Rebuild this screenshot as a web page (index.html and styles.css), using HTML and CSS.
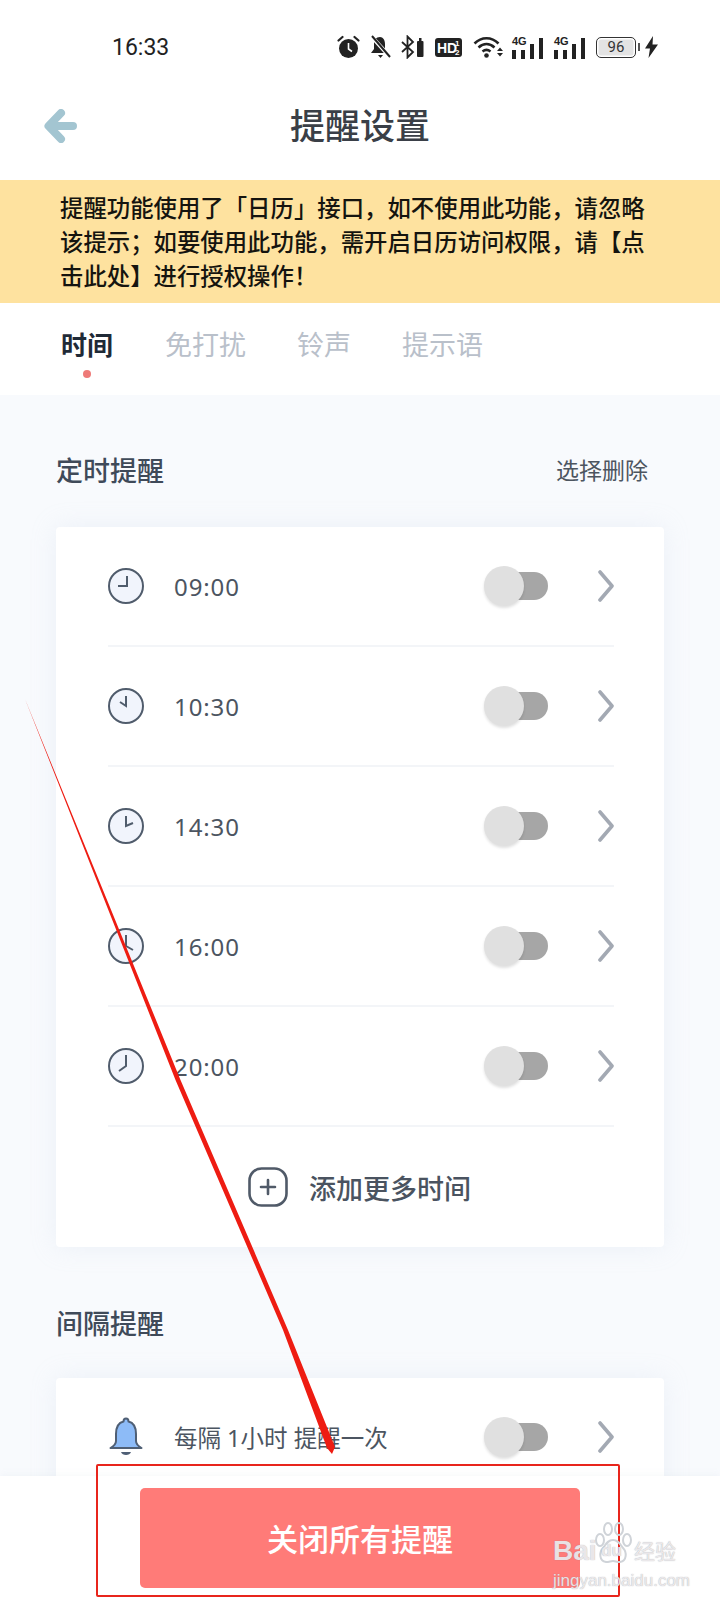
FILE: index.html
```html
<!DOCTYPE html>
<html lang="zh-CN">
<head>
    <meta charset="UTF-8">
    <meta name="viewport" content="width=device-width, initial-scale=1.0">
    <title>提醒设置</title>
    <link rel="stylesheet" href="styles.css">
</head>
<body>
<div class="phone">

    <div class="statusBar">
        <div class="clock">16:33</div>
        <div class="statusIcons">
            <svg class="icoAlarm" width="23" height="24" viewBox="0 0 23 24"><circle cx="11.5" cy="13.5" r="9.5" fill="#222"/><path d="M11.5 8v6l3.5 2.5" fill="none" stroke="#fff" stroke-width="1.6"/><path d="M1.5 5.5 5.5 2M21.5 5.5 17.5 2" stroke="#222" stroke-width="2.2" stroke-linecap="round"/></svg>
            <svg class="icoBell" width="21" height="24" viewBox="0 0 21 24"><path d="M10 2c-4 0-6 3-6 7v5l-3 4h17l-3-4V9c0-4-2-7-5-7z" fill="#222"/><path d="M8 20h5l-2.500 3z" fill="#222"/><path d="M2 2l18 20" stroke="#fff" stroke-width="4"/><path d="M2 1l18 21" stroke="#222" stroke-width="2"/></svg>
            <svg class="icoBt" width="24" height="24" viewBox="0 0 24 24"><path d="M2 7l11 10-5.500 5.500V1.500L13 7 2 17" fill="none" stroke="#222" stroke-width="1.800"/><rect x="17" y="6" width="6.500" height="16" rx="1" fill="#222"/><rect x="19" y="3" width="2.500" height="3" fill="#222"/></svg>
            <svg class="icoHd" width="27" height="19" viewBox="0 0 27 19"><rect width="27" height="19" rx="3" fill="#222"/><text x="2" y="15" class="hdText">HD</text><text x="20" y="8" class="hdSmall">1</text><text x="20" y="17" class="hdSmall">2</text></svg>
            <svg class="icoWifi" width="30" height="22" viewBox="0 0 30 22"><path d="M1.500 7.500c7-7 17-7 24 0M5.500 11.500c5-4.500 11-4.500 16 0M9.500 15.500c2.500-2 5.500-2 8 0" fill="none" stroke="#222" stroke-width="2.600"/><circle cx="13.500" cy="19.500" r="2.300" fill="#222"/><path d="M24 15l3-3.500 3 3.500zM24 17l3 3.500 3-3.500z" fill="#222"/></svg>
            <div class="signal"><span class="netLabel">4G</span><i class="s1"></i><i class="s2"></i><i class="s3"></i><i class="s4"></i></div>
            <div class="signal"><span class="netLabel">4G</span><i class="s1"></i><i class="s2"></i><i class="s3"></i><i class="s4"></i></div>
            <div class="battery"><div class="batteryBody">96</div><div class="batteryTip"></div></div>
            <svg class="icoBolt" width="13" height="22" viewBox="0 0 13 22"><path d="M8 0 0 12.500h5L3.500 22 13 8.500H7.500z" fill="#222"/></svg>
        </div>
    </div>

    <div class="navBar">
        <svg class="backArrow" width="34" height="34" viewBox="0 0 34 34"><path d="M17 4 4.500 17 17 30M6 17h23" fill="none" stroke="#a3c5d1" stroke-width="8" stroke-linecap="round" stroke-linejoin="round"/></svg>
        <div class="navTitle">提醒设置</div>
    </div>

    <div class="notice">提醒功能使用了「日历」接口，如不使用此功能，请忽略该提示；如要使用此功能，需开启日历访问权限，请【点击此处】进行授权操作！</div>

    <div class="tabs">
        <div class="tab active">时间</div>
        <div class="tab">免打扰</div>
        <div class="tab">铃声</div>
        <div class="tab">提示语</div>
    </div>

    <div class="content">
        <div class="sectionHead">
            <div class="sectionTitle">定时提醒</div>
            <div class="sectionAction">选择删除</div>
        </div>

        <div class="card">
            <div class="row">
                <svg class="rowIcon" width="36" height="36" viewBox="0 0 36 36"><circle cx="18" cy="18" r="17" class="clockFace"/><path d="M19 8v10h-9" class="clockHand"/></svg>
                <div class="rowText">09:00</div>
                <div class="switch"><div class="thumb"></div></div>
                <svg class="chevron" width="16" height="32" viewBox="0 0 16 32"><path d="M2 2l12 14L2 30" class="chevronLine"/></svg>
            </div>
            <div class="row">
                <svg class="rowIcon" width="36" height="36" viewBox="0 0 36 36"><circle cx="18" cy="18" r="17" class="clockFace"/><path d="M18 8v10l-6-4" class="clockHand"/></svg>
                <div class="rowText">10:30</div>
                <div class="switch"><div class="thumb"></div></div>
                <svg class="chevron" width="16" height="32" viewBox="0 0 16 32"><path d="M2 2l12 14L2 30" class="chevronLine"/></svg>
            </div>
            <div class="row">
                <svg class="rowIcon" width="36" height="36" viewBox="0 0 36 36"><circle cx="18" cy="18" r="17" class="clockFace"/><path d="M18 8v10l7-3" class="clockHand"/></svg>
                <div class="rowText">14:30</div>
                <div class="switch"><div class="thumb"></div></div>
                <svg class="chevron" width="16" height="32" viewBox="0 0 16 32"><path d="M2 2l12 14L2 30" class="chevronLine"/></svg>
            </div>
            <div class="row">
                <svg class="rowIcon" width="36" height="36" viewBox="0 0 36 36"><circle cx="18" cy="18" r="17" class="clockFace"/><path d="M18 7v11l7 4" class="clockHand"/></svg>
                <div class="rowText">16:00</div>
                <div class="switch"><div class="thumb"></div></div>
                <svg class="chevron" width="16" height="32" viewBox="0 0 16 32"><path d="M2 2l12 14L2 30" class="chevronLine"/></svg>
            </div>
            <div class="row">
                <svg class="rowIcon" width="36" height="36" viewBox="0 0 36 36"><circle cx="18" cy="18" r="17" class="clockFace"/><path d="M18 7v11l-7 5" class="clockHand"/></svg>
                <div class="rowText">20:00</div>
                <div class="switch"><div class="thumb"></div></div>
                <svg class="chevron" width="16" height="32" viewBox="0 0 16 32"><path d="M2 2l12 14L2 30" class="chevronLine"/></svg>
            </div>
            <div class="addRow">
                <svg width="40" height="40" viewBox="0 0 40 40"><rect x="1.500" y="1.500" width="37" height="37" rx="12" fill="none" stroke="#505a68" stroke-width="2.600"/><path d="M20 13v14M13 20h14" stroke="#505a68" stroke-width="2.600" stroke-linecap="round"/></svg>
                <div class="addText">添加更多时间</div>
            </div>
        </div>

        <div class="sectionHead second">
            <div class="sectionTitle">间隔提醒</div>
        </div>

        <div class="card">
            <div class="row">
                <svg class="rowIcon" width="36" height="40" viewBox="0 0 36 40"><path d="M18 1.500c-1.500 0-2.500 1-2.500 3C9.500 6 8 11 8 17v7c0 3-2 5-5.500 7h31C30 29 28 27 28 24v-7c0-6-1.500-11-7.500-12.500 0-2-1-3-2.500-3z" fill="#8dbbf7" stroke="#4f5f75" stroke-width="2" stroke-linejoin="round"/><path d="M13 35h10c-1 4-9 4-10 0z" fill="#4f5f75"/></svg>
                <div class="rowText small">每隔 1小时 提醒一次</div>
                <div class="switch"><div class="thumb"></div></div>
                <svg class="chevron" width="16" height="32" viewBox="0 0 16 32"><path d="M2 2l12 14L2 30" class="chevronLine"/></svg>
            </div>
        </div>
    </div>

    <div class="footer">
        <div class="closeBtn">关闭所有提醒</div>
    </div>

    <!-- annotation drawn on top of the screenshot -->
    <div class="markBox"></div>
    <svg class="markArrow" width="720" height="1600" viewBox="0 0 720 1600"><polygon points="25,699 175.500,1080 283,1330 327,1448 332,1454 335,1447 288,1330 180.500,1080" fill="#ee1c12"/></svg>

    <div class="watermark">
        <div class="wmTop">
            <span class="wmBai">Bai</span>
            <div class="wmPaw">
                <svg width="38" height="42" viewBox="0 0 38 42"><g fill="none" stroke="#cfd3d8" stroke-width="2"><ellipse cx="6" cy="18" rx="4" ry="6"/><ellipse cx="14" cy="7" rx="4" ry="6"/><ellipse cx="25" cy="7" rx="4" ry="6"/><ellipse cx="33" cy="18" rx="4" ry="6"/><path d="M19 18c-5 0-7 4-10 8-4 4-4 13 3 14 3 0 5-1 7-1s4 1 7 1c7-1 7-10 3-14-3-4-5-8-10-8z"/></g></svg>
                <span class="wmDu">du</span>
            </div>
            <span class="wmCn">经验</span>
        </div>
        <div class="wmUrl">jingyan.baidu.com</div>
    </div>

</div>
</body>
</html>
```

FILE: styles.css
```css
* {
    box-sizing: border-box;
}
body {
    margin: 0;
    background: #fff;
    font-family: "Noto Sans", "Noto Sans CJK SC", sans-serif;
}
.phone {
    position: relative;
    width: 720px;
    height: 1600px;
    overflow: hidden;
    background: #f8fafd;
}

/* status bar */
.statusBar {
    height: 94px;
    background: #fff;
    padding: 0 62px 0 112px;
    display: flex;
    align-items: center;
    justify-content: space-between;
}
.clock {
    font-family: Roboto, sans-serif;
    font-size: 23px;
    color: #222;
}
.statusIcons {
    display: flex;
    align-items: center;
    gap: 9px;
}
.icoBell {
    margin-left: 1px;
}
.icoHd, .icoWifi {
    margin-left: 2px;
}
.hdText {
    font-family: "Liberation Sans", sans-serif;
    font-size: 14px;
    font-weight: bold;
    fill: #fff;
}
.hdSmall {
    font-family: "Liberation Sans", sans-serif;
    font-size: 8px;
    font-weight: bold;
    fill: #fff;
}
.signal {
    position: relative;
    width: 31px;
    height: 23px;
    display: flex;
    align-items: flex-end;
    gap: 5px;
}
.signal + .signal {
    margin-left: 2px;
}
.signal i {
    display: block;
    width: 4px;
    background: #222;
}
.signal .s1, .signal .s2 {
    height: 9px;
}
.signal .s3 {
    height: 15px;
}
.signal .s4 {
    height: 21px;
}
.netLabel {
    position: absolute;
    left: 0;
    top: -1px;
    font-family: "Liberation Sans", sans-serif;
    font-size: 11px;
    font-weight: bold;
    color: #222;
}
.battery {
    display: flex;
    align-items: center;
    gap: 2px;
    margin-left: 2px;
}
.batteryBody {
    width: 40px;
    height: 21px;
    border: 1.5px solid #333;
    border-radius: 5px;
    background: #e3e3e3;
    box-shadow: inset 0 0 0 1.5px #fff;
    font-family: Roboto, sans-serif;
    font-size: 15px;
    line-height: 18px;
    text-align: center;
    color: #333;
}
.batteryTip {
    width: 2px;
    height: 8px;
    background: #555;
}
.icoBolt {
    margin-left: -4px;
}

/* header */
.navBar {
    height: 86px;
    background: #fff;
    display: flex;
    align-items: center;
    justify-content: center;
    position: relative;
}
.backArrow {
    position: absolute;
    left: 44px;
    top: 15px;
}
.navTitle {
    font-size: 35px;
    font-weight: 500;
    color: #3a3f47;
    margin-top: -27px;
}

.notice {
    height: 123px;
    background: #fee29f;
    padding: 11px 60px 0;
    font-size: 23.400px;
    font-weight: 500;
    line-height: 34px;
    color: #15140f;
}

.tabs {
    height: 92px;
    background: #fff;
    padding: 0 61px;
    display: flex;
    gap: 51px;
}
.tab {
    font-size: 27px;
    line-height: 84px;
    color: #b9c0ca;
}
.tab.active {
    position: relative;
    font-size: 26px;
    font-weight: 700;
    color: #1f2a37;
    margin-right: 1px;
}
.tab.active::after {
    content: "";
    position: absolute;
    left: 22px;
    bottom: 17px;
    width: 8px;
    height: 8px;
    border-radius: 50%;
    background: #ee7a78;
}

/* list area */
.content {
    padding: 0 56px;
}
.sectionHead {
    height: 132px;
    display: flex;
    align-items: center;
    justify-content: space-between;
    padding-right: 16px;
    padding-top: 38px;
    padding-bottom: 22px;
}
.sectionHead.second {
    height: 131px;
    padding-top: 30px;
    padding-bottom: 10px;
}
.sectionTitle {
    font-size: 27px;
    font-weight: 500;
    color: #3f4a59;
}
.sectionAction {
    font-size: 23px;
    color: #4d5560;
}
.card {
    background: #fff;
    border-radius: 4px;
    box-shadow: 0 0 24px rgba(205, 215, 230, 0.25);
    padding: 0 50px 0 52px;
}
.row {
    height: 120px;
    display: flex;
    align-items: center;
    border-bottom: 2px solid #f3f5f8;
    position: relative;
}
.rowIcon {
    flex: none;
}
.clockFace {
    fill: #f1f4fc;
    stroke: #505c6c;
    stroke-width: 2;
}
.clockHand {
    fill: none;
    stroke: #505c6c;
    stroke-width: 2;
}
.rowText {
    flex: 1;
    margin-left: 30px;
    font-size: 24px;
    letter-spacing: 0.9px;
    color: #4c5561;
}
.rowText.small {
    font-size: 23.500px;
    letter-spacing: 0;
}
.switch {
    width: 46px;
    height: 28px;
    margin-right: 50px;
    border-radius: 0 14px 14px 0;
    background: #a6a6a6;
    position: relative;
}
.thumb {
    position: absolute;
    left: -18px;
    top: -6px;
    width: 40px;
    height: 40px;
    border-radius: 50%;
    background: #e0e0e0;
    box-shadow: 0 2px 3px rgba(0, 0, 0, 0.12);
}
.chevron {
    flex: none;
}
.chevronLine {
    fill: none;
    stroke: #a3a9b3;
    stroke-width: 3.600;
    stroke-linecap: round;
    stroke-linejoin: round;
}
.addRow {
    height: 120px;
    display: flex;
    align-items: center;
    justify-content: center;
    gap: 21px;
    margin-left: -3px;
}
.addText {
    font-size: 27px;
    font-weight: 500;
    color: #4a5360;
}

/* bottom bar */
.footer {
    position: absolute;
    left: 0;
    right: 0;
    bottom: 0;
    height: 124px;
    background: #fff;
    padding: 12px 140px;
    box-shadow: 0 -2px 6px rgba(200, 205, 215, 0.12);
}
.closeBtn {
    height: 100px;
    border-radius: 5px;
    background: #ff7b78;
    color: #fff;
    font-size: 31px;
    font-weight: 500;
    padding-bottom: 2px;
    display: flex;
    align-items: center;
    justify-content: center;
}

/* red marks */
.markBox {
    position: absolute;
    left: 96px;
    top: 1464px;
    width: 524px;
    height: 133px;
    border: 2px solid #e8251c;
    border-radius: 2px;
}
.markArrow {
    position: absolute;
    left: 0;
    top: 0;
}

/* watermark */
.watermark {
    position: absolute;
    left: 553px;
    top: 1522px;
    width: 130px;
    color: rgba(244, 240, 242, 0.9);
    text-shadow: 0 0 1px rgba(120, 125, 135, 0.7);
}
.wmTop {
    display: flex;
    align-items: flex-end;
    height: 42px;
}
.wmBai {
    font-family: "Liberation Sans", sans-serif;
    font-size: 28px;
    font-weight: bold;
    line-height: 26px;
    width: 44px;
}
.wmPaw {
    position: relative;
    width: 38px;
    height: 42px;
    margin-left: -3px;
}
.wmDu {
    position: absolute;
    left: 7px;
    bottom: 3px;
    font-family: "Liberation Sans", sans-serif;
    font-size: 17px;
    font-weight: bold;
}
.wmCn {
    font-size: 21px;
    line-height: 26px;
    margin-left: 2px;
    white-space: nowrap;
}
.wmUrl {
    margin-top: 8px;
    font-family: "Liberation Sans", sans-serif;
    font-size: 17px;
    line-height: 18px;
    white-space: nowrap;
}
```
